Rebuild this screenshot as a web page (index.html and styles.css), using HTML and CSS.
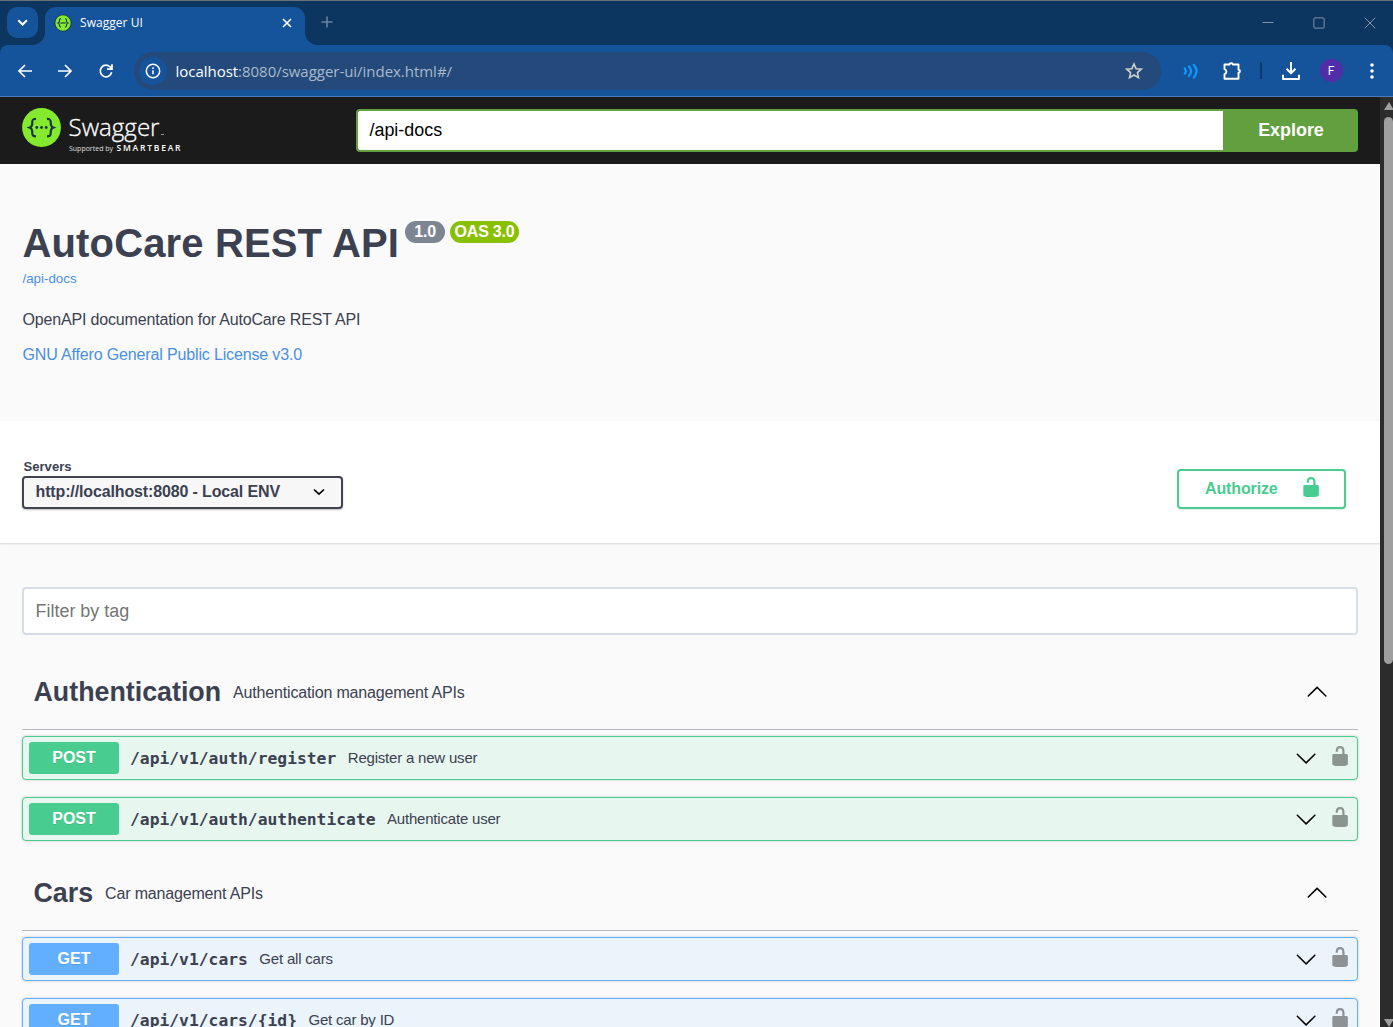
FILE: index.html
```html
<!DOCTYPE html>
<html lang="en">
<head>
<meta charset="utf-8">
<title>Swagger UI</title>
<link rel="stylesheet" href="styles.css">
</head>
<body>
<svg class="defs" width="0" height="0">
  <symbol id="unlocked" viewBox="0 0 20 20"><path d="M15.8 8H14V5.6C14 2.703 12.665 1 10 1 7.334 1 6 2.703 6 5.6V6h2v-.801C8 3.754 8.797 3 10 3c1.203 0 2 .754 2 2.199V8H4c-.553 0-1 .646-1 1.199V17c0 .549.428 1.139.951 1.307l1.197.387C5.672 18.861 6.55 19 7.1 19h5.8c.549 0 1.428-.139 1.951-.307l1.196-.387c.524-.167.953-.757.953-1.306V9.199C17 8.646 16.352 8 15.8 8z"/></symbol>
  <symbol id="arrow-down" viewBox="0 0 20 20"><path d="M17.418 6.109c.272-.268.709-.268.979 0s.271.701 0 .969l-7.908 7.83c-.27.268-.707.268-.979 0l-7.908-7.83c-.27-.268-.271-.701 0-.969.271-.268.709-.268.979 0L10 13.25l7.418-7.141z"/></symbol>
  <symbol id="arrow-up" viewBox="0 0 20 20"><path d="M17.418 14.908c.272.27.709.27.979 0s.271-.701 0-.969l-7.908-7.83c-.27-.268-.707-.268-.979 0l-7.908 7.83c-.27.268-.271.701 0 .969.271.27.709.27.979 0L10 7.767l7.418 7.141z"/></symbol>
</svg>

<header class="tabstrip">
  <div class="tab-search"><svg width="31" height="31" fill="none" stroke="#fff" stroke-width="2"><path d="M11.3 13.3l4.3 4.2 4.3-4.2"/></svg></div>
  <div class="tab">
    <svg class="favicon" width="18" height="18" viewBox="0 0 18 18"><circle cx="9" cy="9" r="8.6" fill="#173647"/><circle cx="9" cy="9" r="7.7" fill="#85ea2d"/><path d="M7 4.8c-1.6 0-1.6.7-1.6 1.9 0 1.3-.2 2-1.2 2.3 1 .3 1.2 1 1.2 2.3 0 1.2 0 1.9 1.6 1.9M11 4.8c1.6 0 1.6.7 1.6 1.9 0 1.3.2 2 1.2 2.3-1 .3-1.2 1-1.2 2.3 0 1.2 0 1.9-1.6 1.9" fill="none" stroke="#173647" stroke-width="1.1"/><path d="M6.3 9h5.4" stroke="#173647" stroke-width="1.1"/></svg>
    <span class="tab-title">Swagger UI</span>
    <svg width="10" height="10" stroke="#fff" stroke-width="1.7"><path d="M1 1l8 8M9 1l-8 8"/></svg>
  </div>
  <svg class="new-tab" width="12" height="12" stroke="#68839f" stroke-width="1.6"><path d="M6 .5v11M.5 6h11"/></svg>
  <div class="window-controls">
    <svg width="12" height="12" fill="none" stroke="#8295aa"><path d="M.5 5.500h11"/></svg>
    <svg width="12" height="12" fill="none" stroke="#8295aa"><rect x=".9" y=".9" width="10.2" height="10.2" rx=".8"/></svg>
    <svg width="12" height="12" fill="none" stroke="#8295aa"><path d="M.7.7l10.600 10.600M11.300.7L.7 11.300"/></svg>
  </div>
</header>

<nav class="toolbar">
  <div class="nav-buttons">
    <svg width="16" height="16" fill="none" stroke="#fff" stroke-width="1.7"><path d="M15 8H2.500M8 2L2 8l6 6"/></svg>
    <svg width="16" height="16" fill="none" stroke="#fff" stroke-width="1.7"><path d="M1 8h12.500M8 2l6 6-6 6"/></svg>
    <svg width="16" height="16" fill="none" stroke="#fff" stroke-width="1.7"><path d="M13.700 9.300A5.800 5.800 0 1 1 12.600 4.400L14 5.800M14 1.200v5H9"/></svg>
  </div>
  <div class="address">
    <div class="site-info"><svg width="16" height="16" fill="none" stroke="#fff" stroke-width="1.5"><circle cx="8" cy="8" r="6.700"/><path d="M8 7.300v4M8 4.300V6"/></svg></div>
    <div class="url"><span class="host">localhost</span>:8080/swagger-ui/index.html#/</div>
    <svg class="star" width="18" height="18" fill="none" stroke="#cfcfca" stroke-width="1.6"><path d="M9 2l2.100 4.700 5.100.500-3.800 3.400 1.100 5L9 13l-4.500 2.600 1.100-5L1.800 7.200l5.100-.5z"/></svg>
  </div>
  <div class="extensions">
    <svg width="16" height="16" fill="none" stroke="#0d99ff" stroke-width="2.2" stroke-linecap="round"><path d="M1.800 5.500q2 2.700 0 5.200M6 3.300q4 4.900 0 9.600M10.800 1.800q5.600 6.400 0 12.700"/></svg>
    <svg class="puzzle" width="20" height="20" viewBox="0 0 20 20" fill="none" stroke="#fff" stroke-width="1.9" stroke-linejoin="round"><path d="M2.500 3.500h5C7.500 1.700 10.800 1.700 10.800 3.500H16.500v5.200c1.900 0 1.900 3 0 3v6H2.500v-4.500c2.500-.8 2.500-4.200 0-5z"/></svg>
    <i class="divider"></i>
    <svg class="download" width="18" height="18" fill="none" stroke="#fff" stroke-width="2" stroke-linejoin="round"><path d="M9 0v11M4.500 6.800L9 11.300l4.500-4.500M1 12.800V17h16v-4.200"/></svg>
    <div class="avatar">F</div>
    <svg class="menu" width="4" height="16" fill="#fff"><circle cx="2" cy="2" r="1.8"/><circle cx="2" cy="8" r="1.8"/><circle cx="2" cy="14" r="1.8"/></svg>
  </div>
</nav>

<div class="viewport">
<main class="page">
  <div class="topbar">
    <svg class="logo" width="162" height="50" viewBox="0 0 162 50">
      <circle cx="19.5" cy="20.5" r="19.4" fill="#85ea2d"/>
      <g fill="none" stroke="#173647" stroke-width="2.2"><path d="M14 11.800c-3.200 0-3.700 1-3.700 3.500 0 3.200-.2 4.500-2.500 5.300 2.300.8 2.500 2.100 2.500 5.300 0 2.500.5 3.500 3.700 3.500M25 11.800c3.200 0 3.700 1 3.700 3.500 0 3.200.2 4.500 2.500 5.300-2.300.8-2.500 2.100-2.500 5.300 0 2.500-.5 3.500-3.700 3.500"/></g>
      <g fill="#173647"><circle cx="14.8" cy="20.5" r="1.4"/><circle cx="19.5" cy="20.5" r="1.4"/><circle cx="24.2" cy="20.5" r="1.4"/></g>
      <text class="logo-name" x="46.5" y="28.500" textLength="91" lengthAdjust="spacingAndGlyphs">Swagger</text>
      <path d="M139 27.500h3" stroke="#999"/>
      <text class="logo-support" x="47" y="44" textLength="44" lengthAdjust="spacingAndGlyphs">Supported by</text>
      <text class="logo-brand" x="94.5" y="43.500" textLength="64">SMARTBEAR</text>
    </svg>
    <div class="spec-input">/api-docs</div>
    <div class="explore">Explore</div>
  </div>

  <section class="info">
    <h1 class="title">AutoCare REST API<span class="badge version">1.0</span><span class="badge oas">OAS 3.0</span></h1>
    <a class="spec-link">/api-docs</a>
    <p class="about">OpenAPI documentation for AutoCare REST API</p>
    <a class="license">GNU Affero General Public License v3.0</a>
  </section>

  <section class="schemes">
    <div class="servers">
      <span class="servers-label">Servers</span>
      <div class="select"><span>http://localhost:8080 - Local ENV</span><svg width="12" height="8" fill="none" stroke="#000" stroke-width="1.7"><path d="M1 1.500l5 4.700 5-4.700"/></svg></div>
    </div>
    <div class="authorize"><span>Authorize</span><svg class="lock"><use href="#unlocked"/></svg></div>
  </section>

  <section class="operations">
    <div class="filter">Filter by tag</div>
    <div class="tag"><h3>Authentication</h3><small>Authentication management APIs</small><svg class="arrow"><use href="#arrow-up"/></svg></div>
    <div class="op post"><span class="method">POST</span><span class="path">/api/v1/auth/register</span><span class="summary">Register a new user</span><svg class="arrow"><use href="#arrow-down"/></svg><svg class="lock"><use href="#unlocked"/></svg></div>
    <div class="op post"><span class="method">POST</span><span class="path">/api/v1/auth/authenticate</span><span class="summary">Authenticate user</span><svg class="arrow"><use href="#arrow-down"/></svg><svg class="lock"><use href="#unlocked"/></svg></div>
    <div class="tag"><h3>Cars</h3><small>Car management APIs</small><svg class="arrow"><use href="#arrow-up"/></svg></div>
    <div class="op get"><span class="method">GET</span><span class="path">/api/v1/cars</span><span class="summary">Get all cars</span><svg class="arrow"><use href="#arrow-down"/></svg><svg class="lock"><use href="#unlocked"/></svg></div>
    <div class="op get"><span class="method">GET</span><span class="path">/api/v1/cars/{id}</span><span class="summary">Get car by ID</span><svg class="arrow"><use href="#arrow-down"/></svg><svg class="lock"><use href="#unlocked"/></svg></div>
  </section>
</main>
<aside class="scrollbar">
  <svg width="10" height="8" fill="#9f9f9f"><path d="M5 0l5 8H0z"/></svg>
  <div class="thumb"></div>
  <svg class="scroll-down" width="10" height="8" fill="#9f9f9f"><path d="M5 8l5-8H0z"/></svg>
</aside>
</div>
</body>
</html>
```
FILE: styles.css
```css
* { box-sizing: border-box; }
html, body { height: 100%; }
body {
  margin: 0;
  height: 1027px;
  display: flex;
  flex-direction: column;
  overflow: hidden;
  background: #0c355f;
  color: #3b4151;
  font-family: "Liberation Sans", Arial, sans-serif;
}
svg { display: block; flex: none; }
.defs { position: absolute; }

/* Browser tab strip */
.tabstrip {
  height: 45px;
  flex: none;
  display: flex;
  border-top: 1px solid #6b7276;
  padding: 6px 17px 0 7px;
}
.tab-search {
  width: 31px;
  height: 31px;
  border-radius: 10px;
  background: #15539a;
}
.tab {
  position: relative;
  width: 260px;
  height: 38px;
  margin-left: 6.500px;
  padding: 0 13px 7px 9.500px;
  display: flex;
  align-items: center;
  background: #15539a;
  border-radius: 11px 11px 0 0;
}
.tab::before, .tab::after {
  content: "";
  position: absolute;
  bottom: 0;
  width: 12px;
  height: 12px;
}
.tab::before { left: -12px; background: radial-gradient(circle at 0 0, transparent 11.5px, #15539a 12px); }
.tab::after { right: -12px; background: radial-gradient(circle at 100% 0, transparent 11.5px, #15539a 12px); }
.tab-title {
  flex: 1;
  margin-left: 8px;
  color: #fff;
  font: 12px/18px "Open Sans", "Noto Sans", sans-serif;
  letter-spacing: 0.05px;
}
.new-tab { margin: 9px 0 0 16px; }
.window-controls { display: flex; gap: 39px; margin: 10px 0 0 auto; }

/* Browser toolbar */
.toolbar {
  height: 52px;
  flex: none;
  display: flex;
  align-items: center;
  padding-right: 19px;
  background: #15539a;
  border-bottom: 1px solid #4a7cb5;
  border-radius: 8px 8px 0 0;
}
.nav-buttons { display: flex; gap: 24.500px; padding-left: 16.500px; width: 134px; }
.address {
  width: 1027px;
  height: 38px;
  display: flex;
  align-items: center;
  padding: 0 18px 0 5px;
  border-radius: 19px;
  background: #234a7a;
}
.site-info {
  width: 28px;
  height: 28px;
  display: grid;
  place-items: center;
  border-radius: 50%;
  background: #15539a;
}
.url {
  flex: 1;
  margin-left: 8.500px;
  color: #a9b9cc;
  font: 15px/20px "Open Sans", "Noto Sans", sans-serif;
  letter-spacing: -0.03px;
}
.host { color: #fff; }
.extensions { flex: 1; display: flex; align-items: center; padding-left: 22px; }
.puzzle { margin-left: 22.500px; }
.divider { width: 2px; height: 17px; margin-left: 18.500px; background: #0c3a6c; }
.download { margin-left: 20px; }
.avatar {
  width: 23px;
  height: 23px;
  margin-left: 19.500px;
  border-radius: 50%;
  background: #512da8;
  color: #fff;
  font: 12px/24px Roboto, sans-serif;
  text-align: center;
}
.menu { margin-left: auto; }

.viewport { flex: 1; min-height: 0; display: flex; }
.page { width: 1380px; overflow: hidden; background: #fafafa; }

/* Swagger top bar */
.topbar {
  height: 67px;
  display: flex;
  padding: 12px 22px 0;
  background: #1b1b1b;
}
.logo { margin-top: -2px; width: 162px; }
.logo text { fill: #fff; }
.logo-name { font: 300 24px "Open Sans", sans-serif; stroke: #fff; stroke-width: .3px; }
.logo-support { font: 7px "Open Sans", sans-serif; opacity: .85; }
.logo-brand { font: 600 8.500px "Open Sans", sans-serif; }
.spec-input {
  width: 867px;
  height: 43px;
  margin-left: 172px;
  padding-left: 11.500px;
  border: 2px solid #62a03f;
  border-right: 0;
  border-radius: 4px 0 0 4px;
  background: #fff;
  color: #000;
  font-size: 17.900px;
  line-height: 38px;
}
.explore {
  width: 135px;
  height: 43px;
  padding-left: 1px;
  border-radius: 0 4px 4px 0;
  background: #62a03f;
  color: #fff;
  font-weight: bold;
  font-size: 17.900px;
  line-height: 42px;
  text-align: center;
}

/* API info */
.info {
  height: 257px;
  display: flex;
  flex-direction: column;
  align-items: flex-start;
  padding: 55px 22.500px 0;
}
.title {
  display: flex;
  height: 48px;
  margin: 0;
  font-size: 40px;
  line-height: 48px;
  letter-spacing: .14px;
}
.badge {
  height: 22px;
  margin: 2px 0 0 5px;
  border-radius: 11px;
  background: #7d8492;
  color: #fff;
  font-size: 16px;
  line-height: 21px;
  letter-spacing: -.2px;
  text-align: center;
}
.version { width: 40px; margin-left: 6px; }
.oas { width: 69px; background: #89bf04; }
.info a { color: #4990e2; }
.spec-link { padding-top: 1px; font-size: 13.330px; line-height: 22px; }
.about { margin: 19px 0 13px; font-size: 16px; line-height: 22px; letter-spacing: -.165px; }
.license { font-size: 16px; line-height: 22px; letter-spacing: -.15px; }

/* Servers and authorization */
.schemes {
  height: 122px;
  display: flex;
  justify-content: space-between;
  padding: 37px 34px 0 22px;
  background: #fff;
  box-shadow: 0 1px 2px rgba(0, 0, 0, .15);
}
.servers-label {
  display: block;
  height: 18px;
  padding-left: 1.500px;
  font-weight: bold;
  font-size: 13.100px;
  line-height: 17px;
}
.select {
  width: 321px;
  height: 33px;
  display: flex;
  justify-content: space-between;
  padding: 0 16px 0 11.500px;
  border: 2px solid #41444e;
  border-radius: 4px;
  background: #f7f7f7;
  box-shadow: 0 1px 2px rgba(0, 0, 0, .25);
  font-weight: bold;
  font-size: 16px;
  line-height: 27px;
  letter-spacing: -.135px;
}
.select svg { margin-top: 10px; }
.authorize {
  width: 169px;
  height: 40px;
  margin-top: 11px;
  display: flex;
  padding-left: 26px;
  border: 2px solid #49cc90;
  border-radius: 4px;
  box-shadow: 0 1px 2px rgba(0, 0, 0, .1);
  color: #49cc90;
  font-weight: bold;
  font-size: 16px;
  line-height: 35px;
  letter-spacing: -.13px;
}
.authorize .lock { margin: 5px 0 0 22.500px; fill: #49cc90; }
.lock, .arrow { width: 22.200px; height: 22.200px; }

/* Operation list */
.operations { padding: 44px 22px 0; }
.filter {
  height: 47.500px;
  padding-left: 11.500px;
  border: 2px solid #d8dde7;
  border-radius: 4px;
  background: #fff;
  color: #757575;
  font-size: 17.950px;
  line-height: 44.500px;
}
.tag {
  height: 74px;
  margin: 21.300px 0 6px;
  display: flex;
  align-items: center;
  padding: 0 30px 0 11.500px;
  border-bottom: 1px solid #b8babf;
}
.tag h3 { margin: 1px 0 0; font-size: 26.800px; }
.tag small { flex: 1; margin: 1px 0 0 12px; font-size: 16px; letter-spacing: -.17px; }
.tag .arrow { margin-top: -3px; }
.op + .tag { margin-top: -1.200px; }
.op {
  height: 44.600px;
  margin-bottom: 16.500px;
  display: flex;
  align-items: center;
  padding: 0 5.500px 0 6px;
  border: 1px solid #49cc90;
  border-radius: 4px;
  background: #e8f6f0;
  box-shadow: 0 0 3px rgba(0, 0, 0, .19);
}
.method {
  width: 90px;
  height: 32px;
  border-radius: 3px;
  background: #49cc90;
  color: #fff;
  font-weight: bold;
  font-size: 16px;
  line-height: 31.500px;
  text-align: center;
  text-shadow: 0 1px 0 rgba(0, 0, 0, .1);
}
.path {
  margin: 1.500px 0 0 11px;
  font: bold 16.320px/20px "DejaVu Sans Mono", monospace;
}
.summary { flex: 1; margin: 0 0 1px 11.500px; font-size: 15px; letter-spacing: -.2px; }
.op .lock { margin: -5px 0 0 12px; fill: #8b948f; }
.get { border-color: #61affe; background: #ebf3fb; }
.get .method { background: #61affe; }
.get .lock { fill: #8d9297; }

.scrollbar {
  width: 13px;
  display: flex;
  flex-direction: column;
  padding: 5px 0 0 4px;
  background: #2c2c2c;
}
.thumb { width: 9px; height: 547px; margin-top: 7px; border-radius: 5px; background: #9f9f9f; }
.scroll-down { margin: auto 0 0; }
```
